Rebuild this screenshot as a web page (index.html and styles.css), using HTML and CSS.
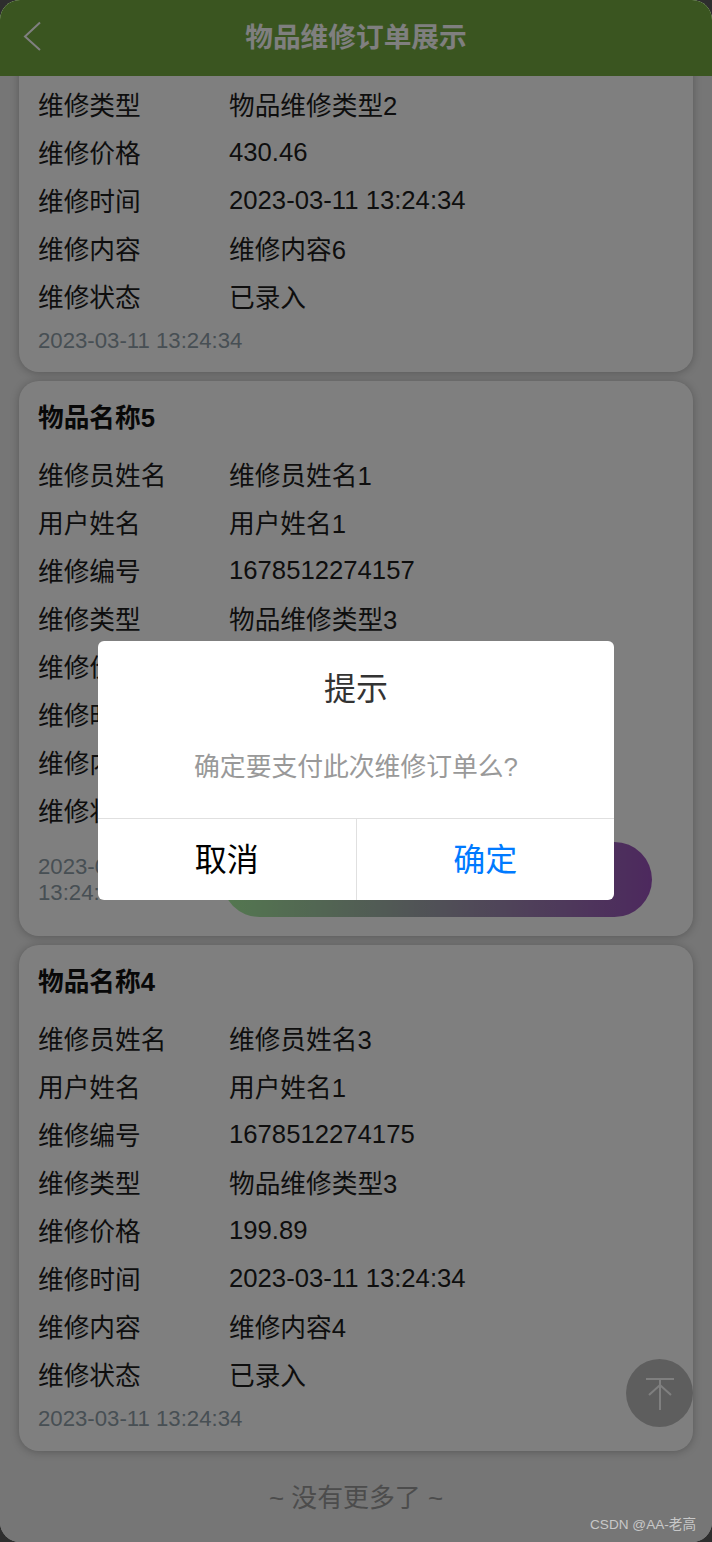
FILE: index.html
```html
<!DOCTYPE html>
<html lang="zh-CN">
<head>
    <meta charset="UTF-8">
    <meta name="viewport" content="width=device-width, initial-scale=1.0">
    <title>物品维修订单展示</title>
    <link rel="stylesheet" href="styles.css">
</head>
<body>
    <div class="phone">
        <header class="topbar">
            <svg class="back-icon" width="20" height="30" viewBox="0 0 20 30">
                <path d="M18 1.500 L3 15.500 L18 29" fill="none" stroke="currentColor" stroke-width="2"/>
            </svg>
            <h1 class="topbar-title">物品维修订单展示</h1>
        </header>

        <main class="content">
            <section class="card card-cut">
                <div class="row"><span class="row-label">维修类型</span><span>物品维修类型2</span></div>
                <div class="row"><span class="row-label">维修价格</span><span class="num">430.46</span></div>
                <div class="row"><span class="row-label">维修时间</span><span class="num">2023-03-11 13:24:34</span></div>
                <div class="row"><span class="row-label">维修内容</span><span>维修内容6</span></div>
                <div class="row"><span class="row-label">维修状态</span><span>已录入</span></div>
                <div class="card-foot"><span class="time">2023-03-11 13:24:34</span></div>
            </section>

            <section class="card">
                <h2 class="card-title">物品名称5</h2>
                <div class="row"><span class="row-label">维修员姓名</span><span>维修员姓名1</span></div>
                <div class="row"><span class="row-label">用户姓名</span><span>用户姓名1</span></div>
                <div class="row"><span class="row-label">维修编号</span><span class="num">1678512274157</span></div>
                <div class="row"><span class="row-label">维修类型</span><span>物品维修类型3</span></div>
                <div class="row"><span class="row-label">维修价格</span><span class="num">215.30</span></div>
                <div class="row"><span class="row-label">维修时间</span><span class="num">2023-03-11 13:24:34</span></div>
                <div class="row"><span class="row-label">维修内容</span><span>维修内容5</span></div>
                <div class="row"><span class="row-label">维修状态</span><span>已录入</span></div>
                <div class="card-foot">
                    <span class="time time-wrap">2023-03-11 13:24:34</span>
                    <button class="pay-btn" type="button"></button>
                </div>
            </section>

            <section class="card">
                <h2 class="card-title">物品名称4</h2>
                <div class="row"><span class="row-label">维修员姓名</span><span>维修员姓名3</span></div>
                <div class="row"><span class="row-label">用户姓名</span><span>用户姓名1</span></div>
                <div class="row"><span class="row-label">维修编号</span><span class="num">1678512274175</span></div>
                <div class="row"><span class="row-label">维修类型</span><span>物品维修类型3</span></div>
                <div class="row"><span class="row-label">维修价格</span><span class="num">199.89</span></div>
                <div class="row"><span class="row-label">维修时间</span><span class="num">2023-03-11 13:24:34</span></div>
                <div class="row"><span class="row-label">维修内容</span><span>维修内容4</span></div>
                <div class="row"><span class="row-label">维修状态</span><span>已录入</span></div>
                <div class="card-foot"><span class="time">2023-03-11 13:24:34</span></div>
            </section>

            <p class="no-more">~ 没有更多了 ~</p>
        </main>

        <div class="to-top">
            <svg width="30" height="34" viewBox="0 0 30 34">
                <path d="M1 3 H29 M15 4 V34 M4 19 L15 9 L26 19" fill="none" stroke="currentColor" stroke-width="2"/>
            </svg>
        </div>

        <div class="overlay">
            <div class="dialog">
                <div class="dialog-title">提示</div>
                <div class="dialog-msg">确定要支付此次维修订单么?</div>
                <div class="dialog-btns">
                    <div class="dialog-btn">取消</div>
                    <div class="dialog-btn dialog-ok">确定</div>
                </div>
            </div>
        </div>

        <div class="watermark">CSDN @AA-老高</div>
    </div>
</body>
</html>
```

FILE: styles.css
```css
* {
    box-sizing: border-box;
}
html, body {
    height: 100%;
}
body {
    margin: 0;
    background-color: #2e2e2e;
    font-family: "Liberation Sans", "Noto Sans CJK SC", sans-serif;
    color: #1c1c1c;
    overflow: hidden;
}
.phone {
    position: relative;
    display: flex;
    flex-direction: column;
    height: 100%;
    overflow: hidden;
    border-radius: 20px;
    background-color: #ececec;
}
.topbar {
    position: relative;
    z-index: 1;
    flex: none;
    display: flex;
    align-items: center;
    justify-content: center;
    height: 76px;
    background-color: #74aa41;
    color: #fff;
}
.back-icon {
    position: absolute;
    left: 22px;
    top: 21px;
}
.topbar-title {
    margin: 0;
    font-size: 27.7px;
    font-weight: bold;
    line-height: 76px;
}
.content {
    flex: 1;
    min-height: 0;
    padding: 0 19px;
}
.card {
    margin-bottom: 9px;
    padding: 19px;
    border-radius: 20px;
    background-color: #fff;
    box-shadow: 0 1px 8px rgba(0, 0, 0, 0.25);
    font-size: 25.7px;
}
.card-cut {
    margin-top: -20px;
    padding-top: 25px;
    padding-bottom: 18px;
}
.card-title {
    margin: 0 0 15px;
    font-size: 25.7px;
    font-weight: bold;
    line-height: 36px;
    color: #111;
}
.row {
    display: flex;
    align-items: center;
    height: 48px;
    padding-top: 2px;
    line-height: 46px;
}
.row-label {
    flex: none;
    width: 191px;
}
.num {
    margin-bottom: 4px;
}
.card-foot {
    display: flex;
    align-items: center;
    margin-top: 7px;
}
.time {
    font-size: 22.2px;
    line-height: 26px;
    color: #8f9ea8;
}
.time-wrap {
    flex: none;
    width: 165px;
}
.pay-btn {
    width: 430px;
    height: 75px;
    margin-left: 19px;
    border: none;
    border-radius: 38px;
    background: linear-gradient(to right, #a8f0a0, #9a52bc);
}
.no-more {
    margin: 29px 0 0;
    text-align: center;
    font-size: 25.9px;
    line-height: 36px;
    color: #999;
}
.to-top {
    position: absolute;
    left: 626px;
    top: 1359px;
    display: flex;
    align-items: center;
    justify-content: center;
    width: 67px;
    height: 68px;
    border-radius: 50%;
    background-color: #bdbdbd;
    color: #fff;
}
.overlay {
    position: absolute;
    inset: 0;
    z-index: 2;
    background-color: rgba(0, 0, 0, 0.5);
}
.dialog {
    position: absolute;
    left: 98px;
    top: 641px;
    width: 516px;
    height: 259px;
    border-radius: 6px;
    background-color: #fff;
    display: flex;
    flex-direction: column;
    text-align: center;
}
.dialog-title {
    padding-top: 27px;
    font-size: 32px;
    line-height: 42px;
    color: #333;
}
.dialog-msg {
    margin-top: 39px;
    font-size: 25.8px;
    line-height: 36px;
    color: #999;
}
.dialog-btns {
    display: flex;
    margin-top: auto;
    height: 82px;
    border-top: 1px solid #e0e0e0;
}
.dialog-btn {
    flex: 1;
    font-size: 32px;
    line-height: 83px;
    color: #000;
}
.dialog-ok {
    border-left: 1px solid #e0e0e0;
    color: #007aff;
}
.watermark {
    position: absolute;
    right: 16px;
    bottom: 7px;
    z-index: 3;
    font-size: 13.6px;
    line-height: 20px;
    color: #c8c8c8;
}
```
